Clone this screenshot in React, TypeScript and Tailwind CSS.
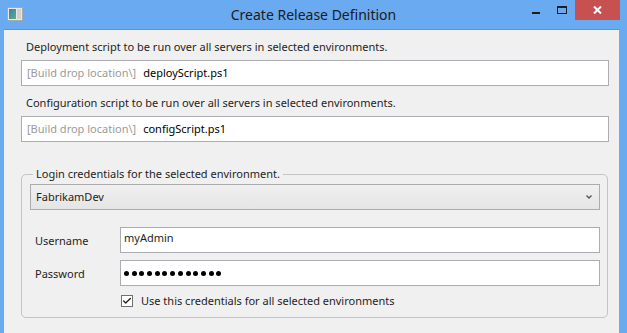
import { Check } from "lucide-react"

function WindowIcon() {
  return (
    <svg width="16" height="14" viewBox="0 0 16 14">
      <rect x="0.5" y="0.5" width="15" height="13" fill="#e8e8e8" stroke="#a9a9a9" />
      <rect x="2" y="2" width="7" height="10" fill="url(#g)" />
      <rect x="10" y="2" width="4" height="10" fill="#d0d0d0" />
      <defs>
        <linearGradient id="g" x1="0" y1="0" x2="1" y2="1">
          <stop offset="0" stopColor="#3b7fb0" />
          <stop offset="1" stopColor="#5fae7a" />
        </linearGradient>
      </defs>
    </svg>
  )
}

function ScriptField({ label, file }: { label: string; file: string }) {
  return (
    <div className="flex flex-col">
      <div className="h-[16px] pl-[5px] leading-[16px]">{label}</div>
      <div className="mt-[5px] flex h-[26px] items-center border border-[#abadb3] bg-white pl-[5px]">
        <span className="text-[#9a9a9a]">[Build drop location\]</span>
        <span className="ml-[7px] text-black">{file}</span>
      </div>
    </div>
  )
}

export default function App() {
  const dots = Array.from({ length: 13 })
  return (
    <div
      className="flex h-[333px] w-[627px] flex-col overflow-hidden bg-[#6aaaf0] text-[11px] text-[#1e1e1e]"
      style={{ fontFamily: '"Noto Sans", "Open Sans", sans-serif' }}
    >
      {/* title bar */}
      <div className="relative flex h-[29px] shrink-0 items-start">
        <div className="ml-[7px] mt-[7px]">
          <WindowIcon />
        </div>
        <div className="absolute left-0 right-0 top-[5px] text-center text-[14px] leading-[20px] text-[#1b1b1b]">
          Create Release Definition
        </div>
        <div className="ml-auto mr-[7px] flex items-start">
          <div className="flex h-[20px] w-[26px] justify-center pt-[12px]">
            <div className="h-[2px] w-[8px] bg-[#1e1e1e]" />
          </div>
          <div className="flex h-[20px] w-[26px] justify-center pt-[6px]">
            <div className="h-[8px] w-[10px] border border-t-2 border-[#1e1e1e]" />
          </div>
          <div className="flex h-[20px] w-[45px] items-center justify-center bg-[#c75050]">
            <svg width="9" height="8" viewBox="0 0 9 8">
              <path d="M1 0.5 L8 7.5 M8 0.5 L1 7.5" stroke="white" strokeWidth="2" />
            </svg>
          </div>
        </div>
      </div>

      {/* client area */}
      <div className="ml-[4px] mr-[8px] flex flex-1 flex-col border-t border-[#5b93d4] bg-[#f0f0f0] pl-[17px] pr-[10px] pt-[9px]">
        <ScriptField label="Deployment script to be run over all servers in selected environments." file="deployScript.ps1" />
        <div className="mt-[9px]">
          <ScriptField label="Configuration script to be run over all servers in selected environments." file="configScript.ps1" />
        </div>

        {/* group box */}
        <div className="relative mr-[1px] mt-[32px] h-[144px] rounded-[5px] border border-[#c4c4c4] pl-[8px] pr-[7px] pt-[9px]">
          <span className="absolute left-[11px] top-[-10px] bg-[#f0f0f0] px-[3px] leading-[18px]">
            Login credentials for the selected environment.
          </span>
          <div className="flex h-[26px] items-center border border-[#acacac] bg-gradient-to-b from-[#f0f0f0] to-[#e5e5e5] pl-[5px] pr-[7px]">
            <span>FabrikamDev</span>
            <svg width="6" height="4" viewBox="0 0 6 4" className="ml-auto">
              <path d="M0.5 0.5 L3 3 L5.5 0.5" stroke="#555" strokeWidth="1.4" fill="none" />
            </svg>
          </div>

          <div className="mt-[17px] flex items-center">
            <span className="w-[90px] pl-[5px] pt-[2px]">Username</span>
            <div className="flex h-[26px] flex-1 items-start border border-[#abadb3] bg-white pl-[3px] leading-[20px]">
              myAdmin
            </div>
          </div>
          <div className="mt-[7px] flex items-center">
            <span className="w-[90px] pl-[5px] pt-[2px]">Password</span>
            <div className="flex h-[26px] flex-1 items-center gap-[2.7px] border border-[#abadb3] bg-white pl-[3px]">
              {dots.map((_, i) => (
                <span key={i} className="h-[5px] w-[5px] rounded-full bg-black" />
              ))}
            </div>
          </div>
          <div className="mt-[8px] flex items-center pl-[91px]">
            <div className="flex h-[12px] w-[12px] items-center justify-center border border-[#707070] bg-white">
              <Check size={10} strokeWidth={3.2} className="text-[#222]" />
            </div>
            <span className="ml-[8px] leading-[14px]">Use this credentials for all selected environments</span>
          </div>
        </div>
      </div>
    </div>
  )
}
